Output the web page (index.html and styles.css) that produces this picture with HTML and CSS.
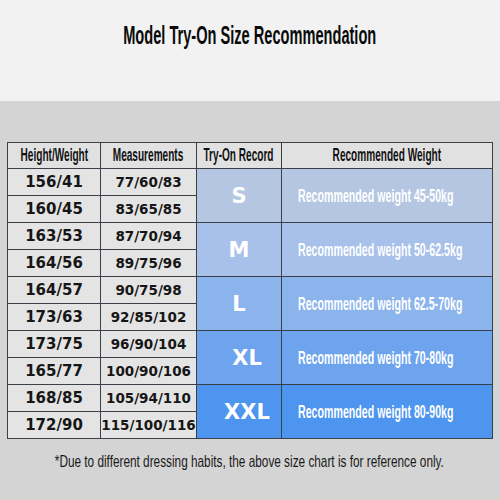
FILE: index.html
```html
<!DOCTYPE html>
<html lang="en">
<head>
  <meta charset="UTF-8" />
  <title>Model Try-On Size Recommendation</title>
  <link rel="stylesheet" href="styles.css">
</head>
<body>
  <header class="banner">
    <h1><span class="narrow">Model Try-On Size Recommendation</span></h1>
  </header>

  <main class="chart">
    <table class="size-table">
      <colgroup>
        <col class="c-hw">
        <col class="c-meas">
        <col class="c-size">
        <col class="c-rec">
      </colgroup>
      <thead>
        <tr>
          <th><div class="center"><span class="narrow">Height/Weight</span></div></th>
          <th><div class="center"><span class="narrow">Measurements</span></div></th>
          <th><div class="center"><span class="narrow">Try-On Record</span></div></th>
          <th><div class="center"><span class="narrow">Recommended Weight</span></div></th>
        </tr>
      </thead>
      <tbody>
        <tr>
          <td class="hw">156/41</td>
          <td class="meas">77/60/83</td>
          <td class="size s" rowspan="2">S</td>
          <td class="rec s" rowspan="2"><span class="narrow">Recommended weight 45-50kg</span></td>
        </tr>
        <tr>
          <td class="hw">160/45</td>
          <td class="meas">83/65/85</td>
        </tr>
        <tr>
          <td class="hw">163/53</td>
          <td class="meas">87/70/94</td>
          <td class="size m" rowspan="2">M</td>
          <td class="rec m" rowspan="2"><span class="narrow">Recommended weight 50-62.5kg</span></td>
        </tr>
        <tr>
          <td class="hw">164/56</td>
          <td class="meas">89/75/96</td>
        </tr>
        <tr>
          <td class="hw">164/57</td>
          <td class="meas">90/75/98</td>
          <td class="size l" rowspan="2">L</td>
          <td class="rec l" rowspan="2"><span class="narrow">Recommended weight 62.5-70kg</span></td>
        </tr>
        <tr>
          <td class="hw">173/63</td>
          <td class="meas">92/85/102</td>
        </tr>
        <tr>
          <td class="hw">173/75</td>
          <td class="meas">96/90/104</td>
          <td class="size xl" rowspan="2">XL</td>
          <td class="rec xl" rowspan="2"><span class="narrow">Recommended weight 70-80kg</span></td>
        </tr>
        <tr>
          <td class="hw">165/77</td>
          <td class="meas">100/90/106</td>
        </tr>
        <tr>
          <td class="hw">168/85</td>
          <td class="meas">105/94/110</td>
          <td class="size xxl" rowspan="2">XXL</td>
          <td class="rec xxl" rowspan="2"><span class="narrow">Recommended weight 80-90kg</span></td>
        </tr>
        <tr>
          <td class="hw">172/90</td>
          <td class="meas">115/100/116</td>
        </tr>
      </tbody>
    </table>

    <div class="note center">
      <span class="narrow">*Due to different dressing habits, the above size chart is for reference only.</span>
    </div>
  </main>
</body>
</html>
```

FILE: styles.css
```css
:root {
  --sans: "Liberation Sans", Arial, sans-serif;
  --wide: "DejaVu Sans", Verdana, sans-serif;
  --line: #3a3f48;
}
body {
  margin: 0;
  width: 500px;
  height: 500px;
  background: #d4d4d4;
  font-family: var(--sans);
  color: #111;
  overflow: hidden;
}
/* no condensed face installed, so squeeze the text */
.narrow {
  display: inline-block;
  white-space: nowrap;
  transform: scaleX(0.56);
  transform-origin: center;
}
.center {
  display: flex;
  justify-content: center;
  white-space: nowrap;
}
.banner {
  height: 101px;
  background: #f2f2f2;
  box-sizing: border-box;
  padding-top: 20px;
}
.banner h1 {
  margin: 0;
  text-align: center;
  font-size: 25px;
  font-weight: bold;
  line-height: 30px;
  color: #0a0a0a;
}
.banner .narrow {
  transform: scaleX(0.584);
}
.chart {
  padding: 41px 8px 0 7px;
}
.size-table {
  width: 485px;
  border-collapse: collapse;
  table-layout: fixed;
  border: 1.5px solid var(--line);
}
.c-hw { width: 93px; }
.c-meas { width: 96px; }
.c-size { width: 85px; }
.c-rec { width: 211px; }
.size-table th,
.size-table td {
  border: 1.5px solid var(--line);
  padding: 0;
  overflow: hidden;
  white-space: nowrap;
}
.size-table th {
  height: 25px;
  background: #e1e1e1;
  font-size: 18px;
  font-weight: bold;
  color: #111;
}
.size-table td {
  height: 26px;
}
.hw,
.meas {
  background: #e4e4e4;
  font-family: var(--wide);
  font-weight: bold;
  text-align: center;
  color: #161616;
}
.hw { font-size: 15px; }
.meas { font-size: 13.5px; }
.size {
  font-family: var(--wide);
  font-size: 21px;
  font-weight: bold;
  color: #fff;
  text-align: center;
}
.size.xl,
.size.xxl {
  padding-left: 16px;
}
.rec {
  padding-left: 16px !important;
  font-size: 19px;
  font-weight: bold;
  color: #fff;
}
.rec .narrow {
  transform: scaleX(0.56);
  transform-origin: left;
}
.s { background: #b5c6e2; }
.m { background: #a7c1ea; }
.l { background: #8cb4ec; }
.xl { background: #6ea4ee; }
.xxl { background: #4d95ee; }
.note {
  margin-top: 13px;
  font-size: 17px;
  color: #1a1a1a;
}
.note .narrow {
  transform: scaleX(0.694);
}
```
